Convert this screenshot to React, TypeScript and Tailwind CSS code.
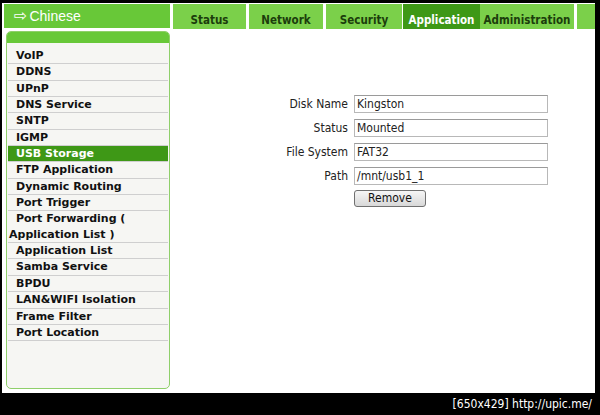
const MENU: { label: string; wrap?: string; active?: boolean }[] = [
  { label: 'VoIP' },
  { label: 'DDNS' },
  { label: 'UPnP' },
  { label: 'DNS Service' },
  { label: 'SNTP' },
  { label: 'IGMP' },
  { label: 'USB Storage', active: true },
  { label: 'FTP Application' },
  { label: 'Dynamic Routing' },
  { label: 'Port Trigger' },
  { label: 'Port Forwarding (', wrap: 'Application List )' },
  { label: 'Application List' },
  { label: 'Samba Service' },
  { label: 'BPDU' },
  { label: 'LAN&WIFI Isolation' },
  { label: 'Frame Filter' },
  { label: 'Port Location' },
];

const TABS = [
  { label: 'Status', w: 'w-[73px]', ml: 'ml-[3px]' },
  { label: 'Network', w: 'w-[74px]', ml: 'ml-[3px]' },
  { label: 'Security', w: 'w-[76px]', ml: 'ml-[3px]' },
  { label: 'Application', w: 'w-[77px]', ml: 'ml-[1px]', active: true },
  { label: 'Administration', w: 'w-[94px]', ml: 'ml-0' },
];

const FIELDS = [
  { label: 'Disk Name', value: 'Kingston' },
  { label: 'Status', value: 'Mounted' },
  { label: 'File System', value: 'FAT32' },
  { label: 'Path', value: '/mnt/usb1_1' },
];

export default function App() {
  return (
    <div className="w-[600px] h-[415px] bg-black flex flex-col font-['DejaVu_Sans',sans-serif]">
      <div className="ml-[2px] mt-[3px] w-[593px] h-[390px] bg-white flex flex-col">
        {/* top bar */}
        <div className="flex items-start mt-[1px]">
          <div className="ml-[2px] w-[166px] h-[24px] bg-[#68c838] flex items-center pl-[10px] text-white text-[14px] font-['Liberation_Sans',sans-serif]">
            <span className="font-['DejaVu_Sans',sans-serif] text-[16px] leading-none mr-[2px]">⇨</span>
            Chinese
          </div>
          {TABS.map((t) => (
            <div
              key={t.label}
              className={`${t.w} ${t.ml} h-[25px] flex items-center justify-center pt-[8px] text-[11.5px] font-bold font-['DejaVu_Sans_Condensed','DejaVu_Sans',sans-serif] ${
                t.active ? 'bg-[#3e9816] text-white' : 'bg-[#7bd04a] text-[#1c3d0c]'
              }`}
            >
              {t.label}
            </div>
          ))}
          <div className="ml-[3px] w-[18px] h-[25px] bg-[#7bd04a]" />
        </div>

        <div className="flex flex-1 mt-[2px]">
          {/* sidebar */}
          <div className="ml-[4px] w-[164px] h-[358px] flex flex-col rounded-[5px] border border-[#8fcf6a] bg-[#f6f6f3] overflow-hidden">
            <div className="h-[11px] bg-[#68c838]" />
            <div className="flex flex-col px-[1px] pt-[5px]">
              {MENU.map((m) => (
                <div
                  key={m.label}
                  className={`border-b border-[#cfcfcf] text-[11px] leading-[15.35px] font-bold font-['DejaVu_Sans',sans-serif] pl-[1px] ${
                    m.active ? 'bg-[#3e9816] text-white' : 'text-[#111]'
                  }`}
                >
                  <div className="pl-[7px]">{m.label}</div>
                  {m.wrap && <div>{m.wrap}</div>}
                </div>
              ))}
            </div>
          </div>

          {/* content */}
          <div className="flex-1 pl-[113px] pt-[64px]">
            <div className="grid grid-cols-[65px_194px] gap-x-[6px] gap-y-[6px] items-center text-[12px] text-[#222] font-['DejaVu_Sans_Condensed','DejaVu_Sans',sans-serif]">
              {FIELDS.map((f) => (
                <div key={f.label} className="contents">
                  <div className="text-right whitespace-nowrap">{f.label}</div>
                  <div className="h-[18px] border border-[#b8b8b8] border-t-[#9a9a9a] pl-[2px] leading-[16px]">{f.value}</div>
                </div>
              ))}
              <div />
              <div className="-mt-[2px]">
                <button className="w-[72px] h-[17px] rounded-[3px] border border-[#707070] bg-gradient-to-b from-[#f6f6f6] to-[#d8d8d8] text-[12px] leading-[15px] text-[#111]">
                  Remove
                </button>
              </div>
            </div>
          </div>
        </div>
      </div>
      <div className="flex-1 flex items-center justify-end pr-[8px] text-white text-[12px] font-['DejaVu_Sans_Condensed',sans-serif]">
        [650x429] http://upic.me/
      </div>
    </div>
  );
}
